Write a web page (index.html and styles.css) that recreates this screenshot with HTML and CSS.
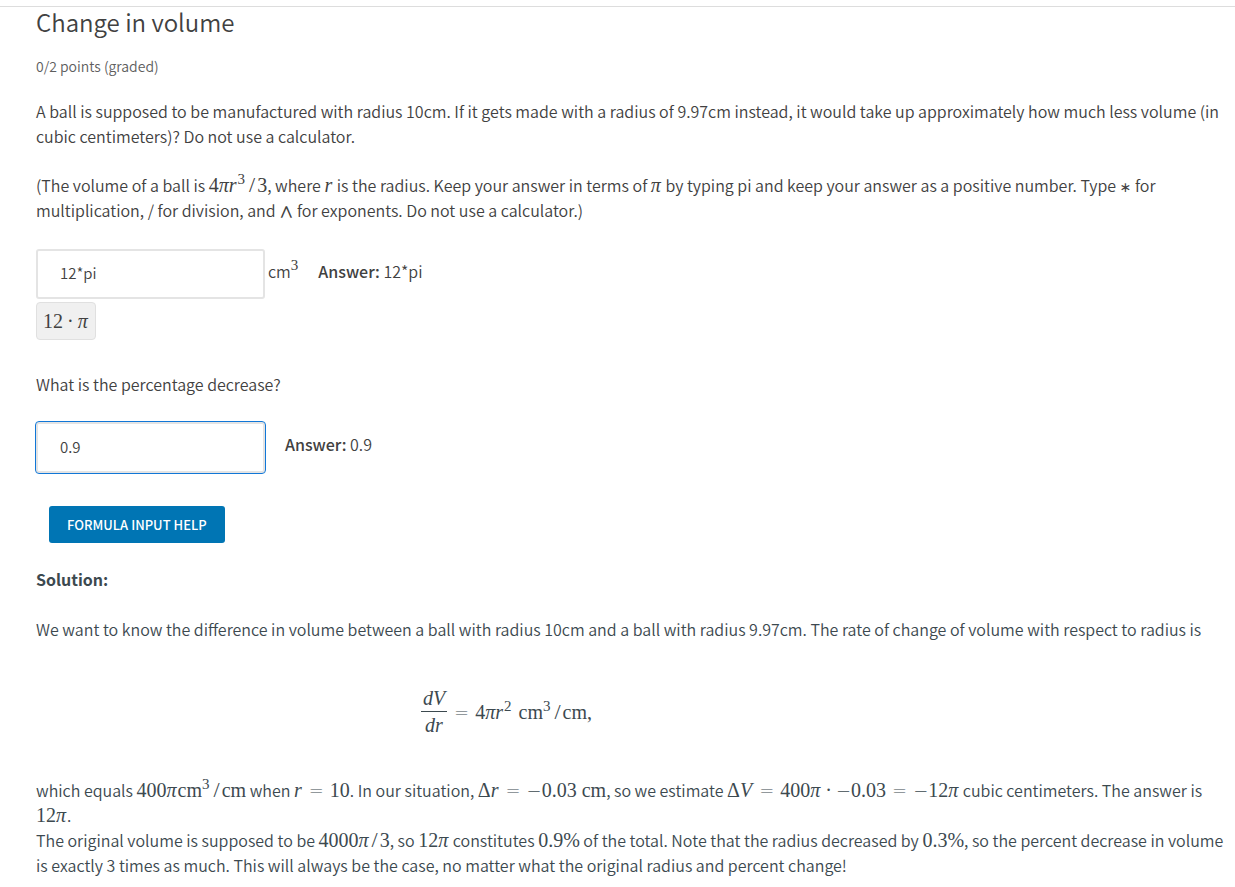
FILE: index.html
```
<!DOCTYPE html>
<html lang="en">
<head>
<meta charset="utf-8">
<title>Change in volume</title>
<link rel="stylesheet" href="styles.css">
</head>
<body>
<main class="problem">
  <h1 class="title">Change in volume</h1>
  <p class="progress">0/2 points (graded)</p>
  <p class="text">A ball is supposed to be manufactured with radius 10cm. If it gets made with a radius of 9.97cm instead, it would take up approximately how much less volume (in cubic centimeters)? Do not use a calculator.</p>
  <p class="text">(The volume of a ball is <span class="math">4<i>πr</i><sup>3</sup><span class="slash">/</span>3</span>, where <span class="math"><i>r</i></span> is the radius. Keep your answer in terms of <span class="math"><i>π</i></span> by typing pi and keep your answer as a positive number. Type <span class="sym">∗</span> for multiplication, / for division, and <span class="sym wedge">∧</span> for exponents. Do not use a calculator.)</p>
  <div class="response">
    <div class="row">
      <input class="field" id="volume" type="text" value="12*pi" aria-label="Volume in cubic centimeters">
      <label class="unit" for="volume">cm<sup class="math">3</sup></label>
      <p class="answer"><strong>Answer:</strong> 12*pi</p>
    </div>
    <div class="preview math">12<span class="dot">·</span><i>π</i></div>
  </div>
  <label class="text question" for="percent">What is the percentage decrease?</label>
  <div class="row second">
    <input class="field focused" id="percent" type="text" value="0.9">
    <p class="answer"><strong>Answer:</strong> 0.9</p>
  </div>
  <button class="help" type="button">FORMULA INPUT HELP</button>
  <section class="solution">
    <p class="text"><strong>Solution:</strong></p>
    <p class="text">We want to know the difference in volume between a ball with radius 10cm and a ball with radius 9.97cm. The rate of change of volume with respect to radius is</p>
    <div class="equation math">
      <span class="fraction"><i class="over">dV</i><i>dr</i></span>
      <span><span class="rel">=</span>4<i>πr</i><sup>2</sup><span class="unit-math">cm<sup>3</sup><span class="slash">/</span>cm,</span></span>
    </div>
    <p class="text">which equals <span class="math">400<i>π</i>cm<sup>3</sup><span class="slash">/</span>cm</span> when <span class="math"><i>r</i><span class="rel">=</span>10</span>. In our situation, <span class="math">Δ<i>r</i><span class="rel">=</span><span class="op">−</span>0.03 cm</span>, so we estimate <span class="math">Δ<i>V</i><span class="rel">=</span>400<i>π</i><span class="dot">·</span><span class="op">−</span>0.03<span class="rel">=</span><span class="op">−</span>12<i>π</i></span> cubic centimeters. The answer is <span class="math">12<i>π</i></span>.<br>The original volume is supposed to be <span class="math">4000<i>π</i><span class="slash">/</span>3</span>, so <span class="math">12<i>π</i></span> constitutes <span class="math">0.9%</span> of the total. Note that the radius decreased by <span class="math">0.3%</span>, so the percent decrease in volume is exactly 3 times as much. This will always be the case, no matter what the original radius and percent change!</p>
  </section>
</main>
</body>
</html>
```

FILE: styles.css
```
* { box-sizing: border-box; }
body {
  margin: 6px 0 0;
  background: #fff;
  color: #414141;
  font: 350 16px/25px "Noto Sans CJK SC", "Noto Sans", sans-serif;
}
.problem {
  border-top: 1px solid #ddd;
  padding: 0 8px 8px 36px;
}
p, h1 { margin: 0; }
.title { font-size: 24px; line-height: 30px; font-weight: 350; }
.progress { margin-top: 17px; font-size: 14px; color: #5e5e5e; }
.text { margin-top: 24px; }
.progress + .text { margin-top: 20px; }
.math {
  font-family: "Liberation Serif", serif;
  font-weight: 400;
  font-size: 20px;
  line-height: 20px;
  white-space: nowrap;
}
.math i { margin-right: 1px; }
sup { font-size: 15px; line-height: 1px; vertical-align: 8px; }
.sym { font-family: "DejaVu Sans", sans-serif; font-weight: 400; font-size: 14px; line-height: 16px; }
.wedge { font-family: "DejaVu Math TeX Gyre", "DejaVu Sans", sans-serif; font-size: 18px; font-weight: 200; }
.slash { margin: 0 2px; font-size: 22px; }
sup + .slash { margin-left: 4px; }
.op, .rel { font-family: "DejaVu Sans", sans-serif; font-weight: 200; font-size: 18px; line-height: 18px; }
.rel { margin: 0 6px; }
.dot { margin: 0 4px; }
.response { margin-top: 26px; }
.row { display: flex; }
.field {
  width: 229px;
  height: 50px;
  padding: 0 22px 3px;
  border: 2px solid #e4e4e4;
  border-radius: 3px;
  background: #fff;
  color: #414141;
  font: inherit;
  font-size: 15px;
}
.focused { height: 51px; outline: 1px solid #1177d7; }
.unit { margin: 10px 0 0 3px; }
.unit sup { font-size: 15px; line-height: 1px; }
.answer { margin: 10px 0 0 20px; }
strong { font-weight: 700; }
.answer strong { font-weight: 500; }
.preview {
  display: inline-flex;
  align-items: center;
  height: 38px;
  margin-top: 3px;
  padding: 0 6px;
  border: 1px solid #e0e0e0;
  border-radius: 4px;
  background: #f0f0f0;
}
.question { display: block; margin-top: 32px; }
.second { margin-top: 25px; }
.help {
  display: block;
  height: 37px;
  margin: 33px 0 0 13px;
  padding: 0 18px;
  border: 0;
  border-radius: 3px;
  background: #0075b4;
  color: #fff;
  font: 500 13px/20px "Noto Sans CJK SC", "Noto Sans", sans-serif;
}
.solution { color: #3c494f; }
.solution .text + .text { margin-top: 25px; }
.equation {
  display: flex;
  align-items: center;
  justify-content: center;
  width: 79%;
  margin-top: 43px;
  line-height: 26px;
}
.fraction { display: flex; flex-direction: column; text-align: center; }
.over { padding: 0 2px; border-bottom: 1px solid #3c494f; }
.unit-math { margin-left: 7px; }
.equation + .text { margin-top: 40px; }
```
